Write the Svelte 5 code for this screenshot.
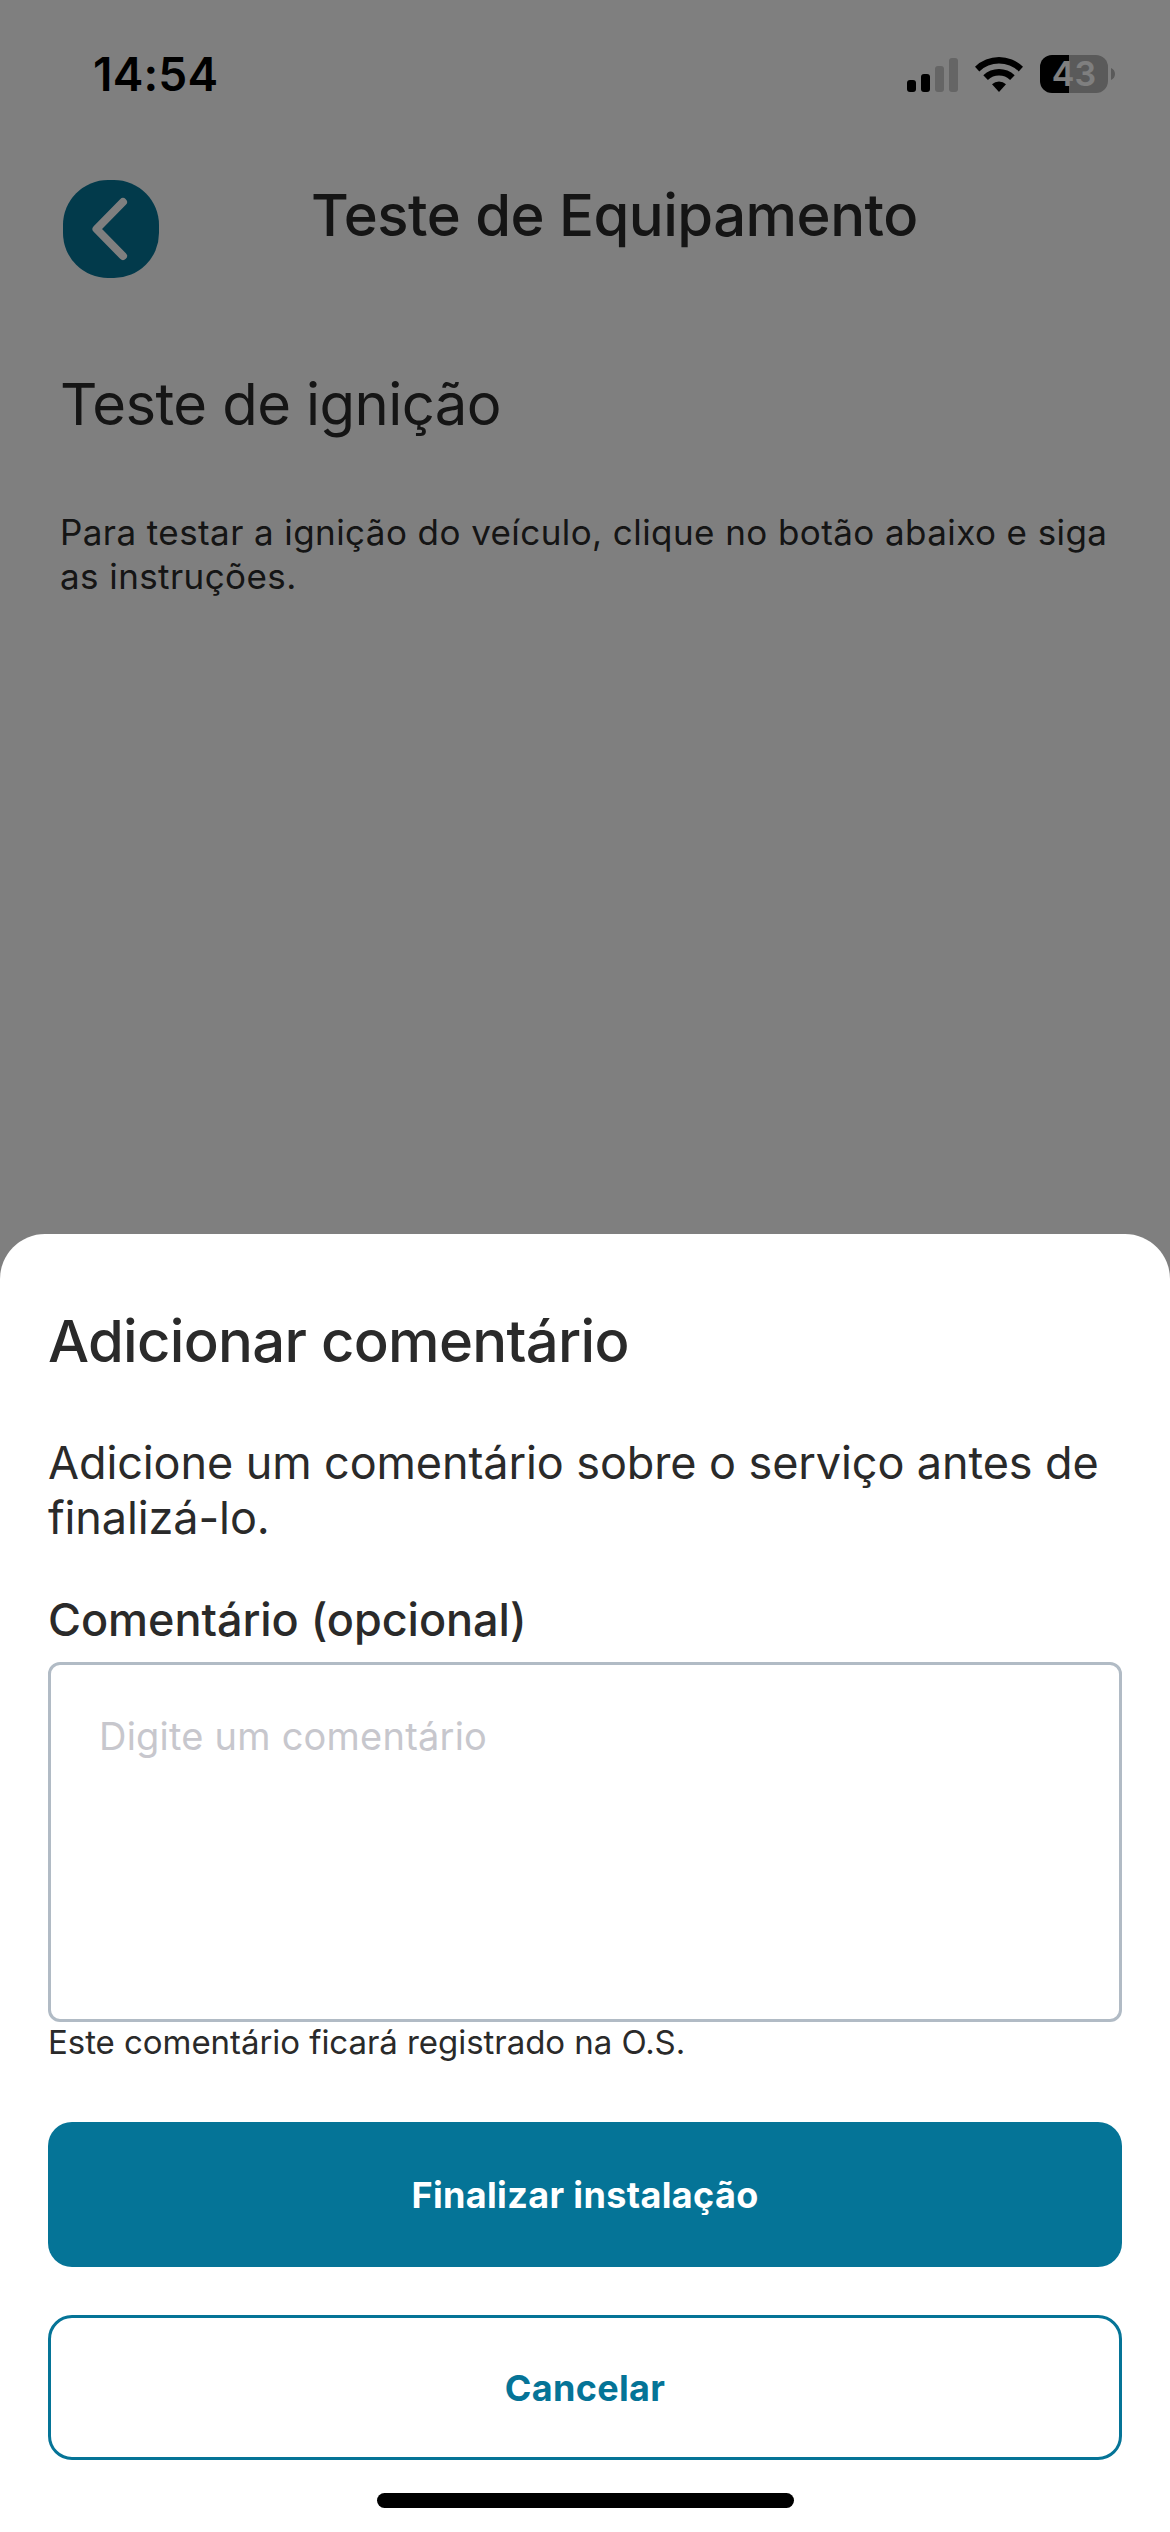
<script lang="ts">
    let comment = $state('')

    const bars = [
        { x: 0, height: 12, on: true },
        { x: 14, height: 18, on: true },
        { x: 28, height: 26, on: false },
        { x: 42, height: 34, on: false },
    ]
</script>

<div class="screen">
    <div class="status">
        <span class="time">14:54</span>
        <div class="indicators">
            <svg class="signal" width="51" height="36" viewBox="0 0 51 36">
                {#each bars as bar}
                    <rect
                        x={bar.x}
                        y={36 - bar.height}
                        width="9"
                        height={bar.height}
                        rx="3"
                        fill={bar.on ? '#000' : '#cacaca'}
                    />
                {/each}
            </svg>
            <svg class="wifi" width="48" height="36" viewBox="0 0 48 36">
                <path d="M0 10.8a34.5 34.5 0 0 1 48 0l-4.3 4.6a28.5 28.5 0 0 0-39.4 0z" />
                <path d="M8.3 19.2a22.8 22.8 0 0 1 31.4 0l-4.6 4.8a16.2 16.2 0 0 0-22.2 0z" />
                <path d="M17 28.2a10.4 10.4 0 0 1 14 0L24 36z" />
            </svg>
            <div class="battery">
                <div class="level"><span>43</span></div>
                <svg width="4" height="12" viewBox="0 0 4 12">
                    <path d="M0 0c2.4.9 4 3.3 4 6s-1.6 5.1-4 6z" fill="#b4b4b4" />
                </svg>
            </div>
        </div>
    </div>

    <header>
        <button class="back" aria-label="Voltar">
            <svg width="96" height="98" viewBox="0 0 96 98">
                <path d="M60 22L33.5 49L60 76" />
            </svg>
        </button>
        <h1>Teste de Equipamento</h1>
    </header>

    <main>
        <h2>Teste de ignição</h2>
        <p>Para testar a ignição do veículo, clique no botão abaixo e siga as instruções.</p>
    </main>

    <div class="overlay">
        <section class="sheet">
            <h3>Adicionar comentário</h3>
            <p class="description">Adicione um comentário sobre o serviço antes de finalizá-lo.</p>
            <label for="comment">Comentário (opcional)</label>
            <textarea id="comment" placeholder="Digite um comentário" bind:value={comment}></textarea>
            <small>Este comentário ficará registrado na O.S.</small>
            <button class="btn primary">Finalizar instalação</button>
            <button class="btn outline">Cancelar</button>
            <div class="home-indicator"></div>
        </section>
    </div>
</div>

<style>
    :global(body) {
        margin: 0;
    }

    .screen {
        position: relative;
        box-sizing: border-box;
        width: 1170px;
        height: 2532px;
        overflow: hidden;
        background: #fff;
        color: #2a2a2a;
        font-family: Inter, 'Liberation Sans', sans-serif;
    }

    h1,
    h2,
    h3,
    p {
        margin: 0;
    }

    button {
        padding: 0;
        border: none;
        font-family: inherit;
    }

    .status {
        display: flex;
        align-items: center;
        justify-content: space-between;
        box-sizing: border-box;
        height: 148px;
        padding: 0 55px 0 93px;
        color: #000;
    }

    .time {
        font-size: 46px;
        font-weight: 600;
        line-height: 56px;
        letter-spacing: 0.2px;
    }

    .indicators {
        display: flex;
        align-items: center;
    }

    .signal {
        margin-right: 17px;
    }

    .wifi {
        margin-right: 17px;
    }

    .battery {
        display: flex;
        align-items: center;
        gap: 3px;
    }

    .level {
        display: flex;
        align-items: center;
        justify-content: center;
        width: 68px;
        height: 38px;
        border-radius: 12px;
        background: linear-gradient(to right, #000 29px, #b4b4b4 29px);
        color: #fff;
        font-size: 34px;
        font-weight: 600;
        line-height: 38px;
    }

    header {
        display: flex;
        align-items: flex-start;
        padding: 32px 63px 0;
    }

    .back {
        display: flex;
        width: 96px;
        height: 98px;
        border-radius: 45px;
        background: #057497;
    }

    .back path {
        fill: none;
        stroke: #fff;
        stroke-width: 8;
        stroke-linecap: round;
        stroke-linejoin: round;
    }

    h1 {
        margin: -1px 0 0 152px;
        font-size: 58px;
        font-weight: 500;
        line-height: 72px;
        letter-spacing: -0.52px;
        white-space: nowrap;
    }

    main {
        padding: 90px 50px 0 60px;
    }

    h2 {
        font-size: 58px;
        font-weight: 400;
        line-height: 72px;
        letter-spacing: -0.6px;
    }

    main p {
        margin-top: 70px;
        font-size: 35px;
        line-height: 44px;
        letter-spacing: 0.42px;
    }

    .overlay {
        position: absolute;
        inset: 0;
        display: flex;
        flex-direction: column;
        justify-content: flex-end;
        background: rgba(0, 0, 0, 0.5);
    }

    .sheet {
        display: flex;
        flex-direction: column;
        box-sizing: border-box;
        height: 1298px;
        padding: 71px 48px 0;
        border-radius: 45px 45px 0 0;
        background: #fff;
    }

    h3 {
        font-size: 58px;
        font-weight: 500;
        line-height: 72px;
        letter-spacing: -0.7px;
    }

    .description {
        margin-top: 58px;
        font-size: 45px;
        line-height: 55px;
        letter-spacing: -0.1px;
    }

    label {
        margin-top: 47px;
        font-size: 45px;
        font-weight: 500;
        line-height: 56px;
        letter-spacing: -0.05px;
    }

    textarea {
        box-sizing: border-box;
        height: 360px;
        margin: 14px 0 0;
        padding: 47px 48px;
        border: 3px solid #b1bbc5;
        border-radius: 12px;
        outline: none;
        background: #fff;
        color: inherit;
        font-family: inherit;
        font-size: 38px;
        line-height: 48px;
        letter-spacing: 0.22px;
        resize: none;
    }

    textarea::placeholder {
        color: #c7c7cd;
        opacity: 1;
    }

    small {
        font-size: 33px;
        line-height: 40px;
        letter-spacing: -0.05px;
    }

    .btn {
        box-sizing: border-box;
        height: 145px;
        border-radius: 24px;
        font-size: 36px;
        font-weight: 700;
        letter-spacing: 0.35px;
    }

    .primary {
        margin-top: 60px;
        background: #057497;
        color: #fff;
    }

    .outline {
        margin-top: 48px;
        border: 3px solid #057497;
        background: #fff;
        color: #057497;
    }

    .home-indicator {
        align-self: center;
        width: 417px;
        height: 15px;
        margin-top: 33px;
        border-radius: 8px;
        background: #000;
    }
</style>
